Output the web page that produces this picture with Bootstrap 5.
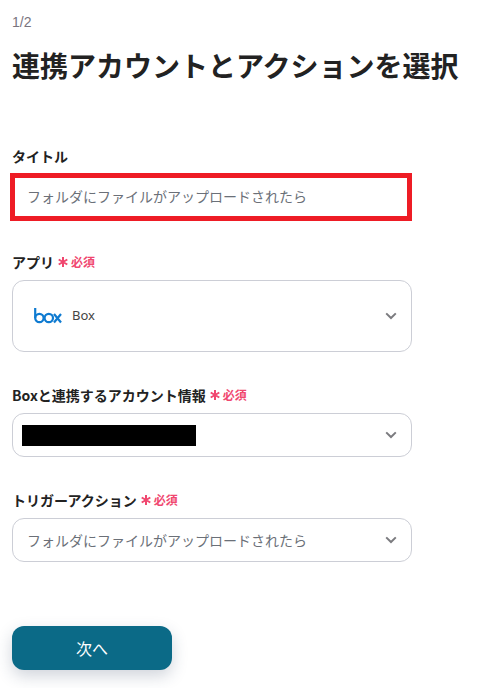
<!DOCTYPE html>
<html lang="ja">
<head>
<meta charset="utf-8">
<title>連携アカウントとアクションを選択</title>
<link href="https://cdn.jsdelivr.net/npm/bootstrap@5.3.0/dist/css/bootstrap.min.css" rel="stylesheet">
<style>
html, body { height: 688px; overflow: hidden; }
body { font-family: "Noto Sans CJK JP", "Noto Sans", sans-serif; color: #212529; background: #fff; }
.sheet { width: 400px; margin-left: 12px; padding-top: 14px; }
.step-no { font-family: "Liberation Sans", sans-serif; font-size: 14px; line-height: 17px; color: #79747e; }
.page-title { font-size: 28px; font-weight: 700; line-height: 40px; margin: 14px 0 61px; white-space: nowrap; color: #222; }
.field-label { font-size: 14px; font-weight: 700; line-height: 20px; margin-bottom: 7px; display: flex; align-items: center; color: #222; }
.req { color: #f0476f; font-size: 12px; font-weight: 700; margin-left: 4px; display: flex; align-items: center; gap: 3px; }
.red-frame { border: 5px solid #ee1c25; margin-left: -2px; height: 48px; display: flex; align-items: center; padding: 0 0 2px 12px; font-size: 14px; color: #6b7078; background: #fff; }
.select-box { border: 1px solid #ccced6; border-radius: 12px; display: flex; align-items: center; justify-content: space-between; padding: 0 14px; font-size: 14px; color: #6b7078; background: #fff; }
.h-tall { height: 72px; padding-left: 21px; }
.h-std { height: 44px; }
.box-name { font-family: "Noto Sans", sans-serif; font-size: 13px; color: #444; margin-left: 10px; }
.masked { display: block; width: 174px; height: 21px; background: #000; margin-left: -5px; }
.go-btn { width: 160px; height: 44px; background: #0b6a87; border: 0; border-radius: 12px; color: #fff; font-size: 16px; box-shadow: 0 6px 16px rgba(40, 60, 90, .22); }
.go-btn:hover { background: #0b6a87; color: #fff; }
.gap-a { margin-top: 31px; }
.gap-b { margin-top: 33px; }
.gap-c { margin-top: 33px; }
.gap-d { margin-top: 64px; }
</style>
</head>
<body>
<main class="sheet">
  <div class="step-no">1/2</div>
  <h1 class="page-title">連携アカウントとアクションを選択</h1>

  <div class="field-label">タイトル</div>
  <div class="red-frame">フォルダにファイルがアップロードされたら</div>

  <div class="gap-a">
    <div class="field-label mb-2">アプリ<span class="req"><svg width="10" height="10" viewBox="0 0 10 10" aria-hidden="true"><path d="M5 0v10M.7 2.5l8.6 5M.7 7.5l8.6-5" stroke="#f0476f" stroke-width="2"/></svg>必須</span></div>
    <div class="select-box h-tall">
      <div class="d-flex align-items-center">
        <svg width="28" height="16" viewBox="0 0 28 16" aria-hidden="true" fill="none" stroke="#0f7bd1" stroke-width="2.2"><path d="M1.2 0v10"/><circle cx="5.4" cy="10" r="4.2"/><circle cx="14.8" cy="10" r="4.2"/><path d="M20 6l7 8.5M27 6l-7 8.5"/></svg>
        <span class="box-name">Box</span>
      </div>
      <svg width="12" height="8" viewBox="0 0 12 8" aria-hidden="true"><path d="M1.2 1.4 6 6l4.8-4.6" fill="none" stroke="#7b7b7f" stroke-width="2"/></svg>
    </div>
  </div>

  <div class="gap-b">
    <div class="field-label mb-2">Boxと連携するアカウント情報<span class="req"><svg width="10" height="10" viewBox="0 0 10 10" aria-hidden="true"><path d="M5 0v10M.7 2.5l8.6 5M.7 7.5l8.6-5" stroke="#f0476f" stroke-width="2"/></svg>必須</span></div>
    <div class="select-box h-std">
      <span class="masked"></span>
      <svg width="12" height="8" viewBox="0 0 12 8" aria-hidden="true"><path d="M1.2 1.4 6 6l4.8-4.6" fill="none" stroke="#7b7b7f" stroke-width="2"/></svg>
    </div>
  </div>

  <div class="gap-c">
    <div class="field-label mb-2">トリガーアクション<span class="req"><svg width="10" height="10" viewBox="0 0 10 10" aria-hidden="true"><path d="M5 0v10M.7 2.5l8.6 5M.7 7.5l8.6-5" stroke="#f0476f" stroke-width="2"/></svg>必須</span></div>
    <div class="select-box h-std">
      <span>フォルダにファイルがアップロードされたら</span>
      <svg width="12" height="8" viewBox="0 0 12 8" aria-hidden="true"><path d="M1.2 1.4 6 6l4.8-4.6" fill="none" stroke="#7b7b7f" stroke-width="2"/></svg>
    </div>
  </div>

  <div class="gap-d"><button type="button" class="btn go-btn">次へ</button></div>
</main>
<script src="https://cdn.jsdelivr.net/npm/bootstrap@5.3.0/dist/js/bootstrap.bundle.min.js"></script>
</body>
</html>
